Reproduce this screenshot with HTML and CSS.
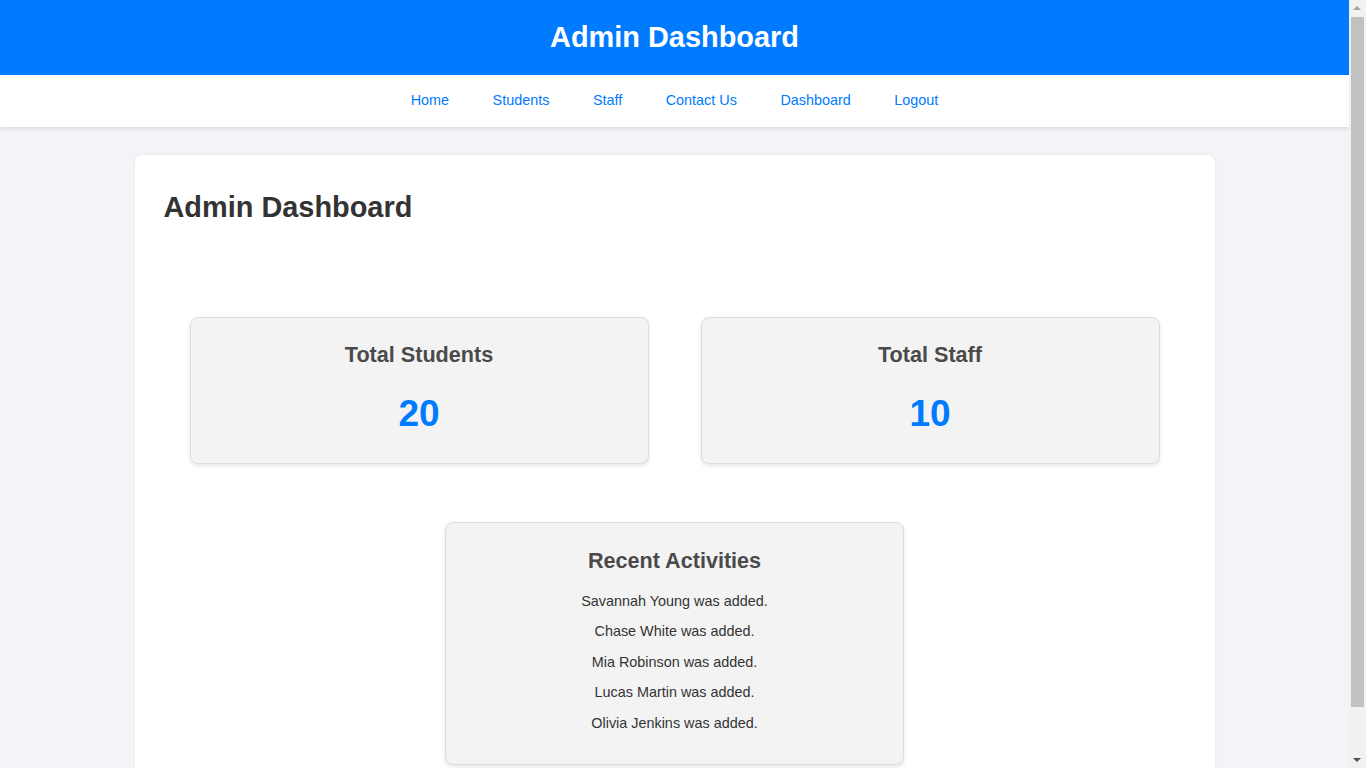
FILE: index.html
```html
<!DOCTYPE html>
<html lang="en">
<head>
<meta charset="utf-8">
<title>Admin Dashboard</title>
<link rel="stylesheet" href="styles.css">
</head>
<body>
<div class="page">
  <header class="topbar">
    <h1 class="topbar-title">Admin Dashboard</h1>
  </header>
  <nav class="navbar">
    <a href="#">Home</a>
    <a href="#">Students</a>
    <a href="#">Staff</a>
    <a href="#">Contact Us</a>
    <a href="#">Dashboard</a>
    <a href="#">Logout</a>
  </nav>
  <main class="container">
    <h1 class="page-title">Admin Dashboard</h1>
    <div class="stats">
      <div class="card stat-card">
        <h3 class="card-title">Total Students</h3>
        <p class="stat-number">20</p>
      </div>
      <div class="card stat-card">
        <h3 class="card-title">Total Staff</h3>
        <p class="stat-number">10</p>
      </div>
    </div>
    <div class="card activities">
      <h3 class="card-title activities-title">Recent Activities</h3>
      <p class="activity">Savannah Young was added.</p>
      <p class="activity">Chase White was added.</p>
      <p class="activity">Mia Robinson was added.</p>
      <p class="activity">Lucas Martin was added.</p>
      <p class="activity">Olivia Jenkins was added.</p>
    </div>
  </main>
</div>
<div class="scrollbar" aria-hidden="true">
  <div class="scroll-arrow scroll-up"></div>
  <div class="scroll-track"><div class="scroll-thumb"></div></div>
  <div class="scroll-arrow scroll-down"></div>
</div>
</body>
</html>
```

FILE: styles.css
```css
* { box-sizing: border-box; }

html::-webkit-scrollbar { width: 0; height: 0; }

body {
  margin: 0;
  background: #f4f4f8;
  font-family: "Liberation Sans", Arial, sans-serif;
  color: #333;
}

.page {
  width: 1349px;
}

.topbar {
  background: #007bff;
  height: 75px;
  display: flex;
  align-items: center;
  justify-content: center;
}

.topbar-title {
  margin: 0;
  color: #fff;
  font-size: 28.9px;
  font-weight: bold;
}

.navbar {
  background: #fff;
  height: 52px;
  display: flex;
  align-items: center;
  justify-content: center;
  gap: 43.5px;
  padding-bottom: 2px;
  box-shadow: 0 2px 4px rgba(0, 0, 0, 0.1);
}

.navbar a {
  color: #007bff;
  text-decoration: none;
  font-size: 14.4px;
}

.container {
  width: 1080px;
  margin: 28px auto 28px;
  background: #fff;
  border-radius: 8px;
  padding: 36px 29px 29px;
  box-shadow: 0 0 4px rgba(0, 0, 0, 0.05);
}

.page-title {
  margin: 0;
  font-size: 28.9px;
  color: #333;
}

.stats {
  display: flex;
  justify-content: space-around;
  margin-top: 93px;
}

.card {
  width: 459px;
  background: #f3f3f3;
  border: 1px solid #ddd;
  border-radius: 8px;
  box-shadow: 0 2px 4px rgba(0, 0, 0, 0.1);
  text-align: center;
}

.stat-card {
  height: 147px;
  padding: 24px 20px 0;
}

.card-title {
  margin: 0;
  font-size: 21.6px;
  font-weight: bold;
  color: #4a4a4a;
}

.stat-number {
  margin: 25px 0 0;
  font-size: 37px;
  font-weight: bold;
  color: #007bff;
}

.activities {
  margin: 58px auto 0;
  padding: 25px 20px 19px;
}

.activities-title {
  margin-bottom: 19px;
}

.activity {
  margin: 14.4px 0;
  font-size: 14.4px;
  color: #333;
}

.scrollbar {
  position: fixed;
  top: 0;
  right: 0;
  width: 17px;
  height: 100vh;
  background: #f1f1f1;
  display: flex;
  flex-direction: column;
}

.scroll-arrow {
  height: 17px;
  position: relative;
}

.scroll-arrow::after {
  content: "";
  position: absolute;
  left: 4px;
  width: 0;
  height: 0;
  border-left: 4px solid transparent;
  border-right: 4px solid transparent;
}

.scroll-up::after {
  top: 6px;
  border-bottom: 4px solid #a3a3a3;
}

.scroll-down::after {
  top: 7px;
  border-top: 4px solid #505050;
}

.scroll-track {
  flex: 1;
  padding: 0 2px;
}

.scroll-thumb {
  height: 690px;
  background: #c1c1c1;
}
```
